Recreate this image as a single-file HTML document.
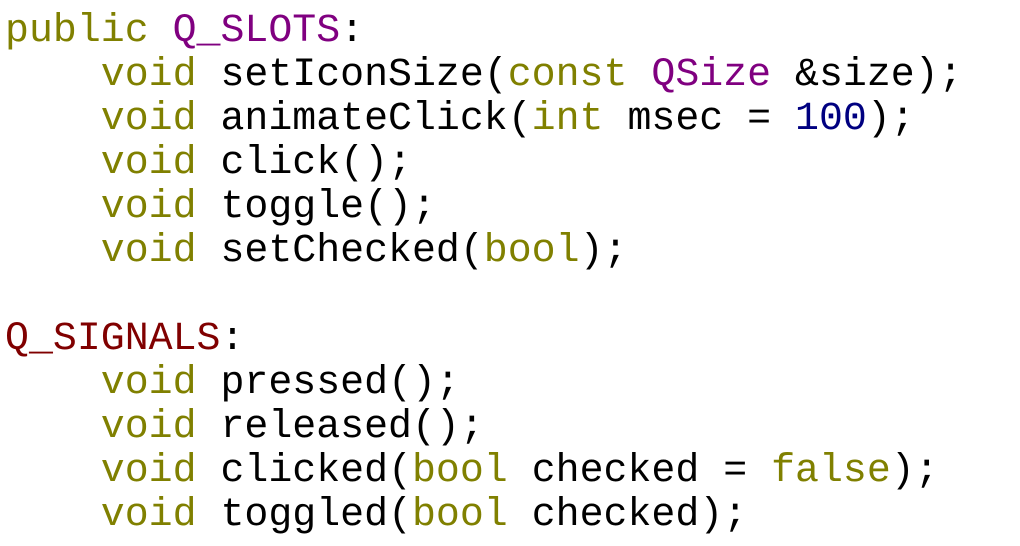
<!DOCTYPE html>
<html><head><style>
html,body{margin:0;padding:0;background:#fff;width:1020px;height:546px;overflow:hidden}
pre{margin:0;padding:9px 0 0 5px;font-family:"Liberation Mono","Courier New",monospace;font-size:39.9px;line-height:44px;color:#000}
.k{color:#808000}.m{color:#800080}.r{color:#800000}.n{color:#000080}
</style></head><body><pre><span class="k">public</span> <span class="m">Q_SLOTS</span>:
    <span class="k">void</span> setIconSize(<span class="k">const</span> <span class="m">QSize</span> &amp;size);
    <span class="k">void</span> animateClick(<span class="k">int</span> msec = <span class="n">100</span>);
    <span class="k">void</span> click();
    <span class="k">void</span> toggle();
    <span class="k">void</span> setChecked(<span class="k">bool</span>);

<span class="r">Q_SIGNALS</span>:
    <span class="k">void</span> pressed();
    <span class="k">void</span> released();
    <span class="k">void</span> clicked(<span class="k">bool</span> checked = <span class="k">false</span>);
    <span class="k">void</span> toggled(<span class="k">bool</span> checked);
</pre></body></html>
